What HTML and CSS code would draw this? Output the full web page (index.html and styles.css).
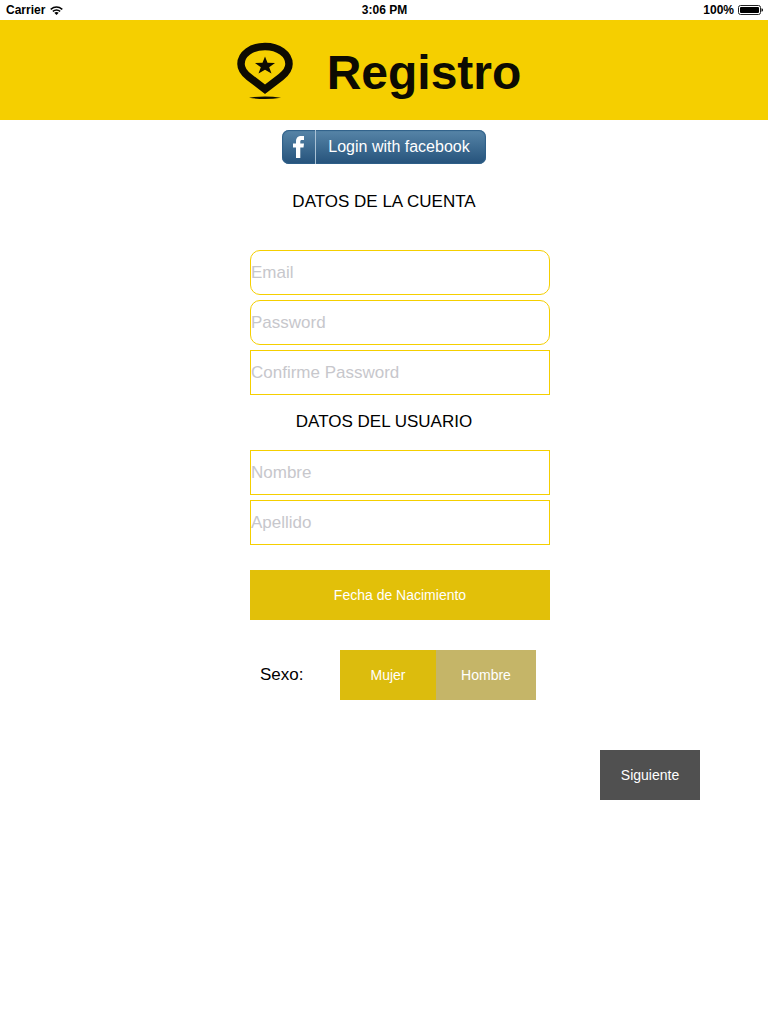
FILE: index.html
```html
<!DOCTYPE html>
<html lang="es">
<head>
<meta charset="utf-8">
<meta name="viewport" content="width=device-width, initial-scale=1">
<title>Registro</title>
<link rel="stylesheet" href="styles.css">
</head>
<body>
<div class="status">
  <div class="status-left">
    <span>Carrier</span>
    <svg class="wifi" viewBox="0 0 13 9" aria-hidden="true">
      <path d="M.7 3.3Q6.500-1.300 12.300 3.300M2.800 5.400Q6.500 2.500 10.200 5.400" fill="none" stroke="#000" stroke-width="1.500"/>
      <path d="M4.300 6.700Q6.500 5.100 8.700 6.700L6.500 9Z"/>
    </svg>
  </div>
  <span>3:06 PM</span>
  <div class="status-right">
    <span>100%</span>
    <svg class="battery" viewBox="0 0 25 10" aria-hidden="true">
      <rect x=".5" y=".5" width="22" height="9" rx="2" fill="#fff" stroke="#222"/>
      <rect x="2" y="2" width="19" height="6" rx="1"/>
      <path d="M23.500 3.200Q25 3.500 25 5T23.500 6.800Z"/>
    </svg>
  </div>
</div>
<header class="header">
  <svg class="pin" viewBox="0 0 56 58" aria-hidden="true">
    <path d="M28 4.500C14.500 4.500 4 12 4 22C4 28 7.500 31.500 12 35L28 47.300L44 35C48.500 31.500 52 28 52 22C52 12 41.500 4.500 28 4.500Z" fill="none" stroke="#0d0b02" stroke-width="7.500"/>
    <path d="M28 14.500L30.500 20.800L38 21L32.200 25.200L34.500 31.500L28 27.800L21.500 31.500L23.800 25.200L18 21L25.500 20.800Z" fill="#0d0b02"/>
    <path d="M12 55.800Q28 53 44 55.800Q28 58.200 12 55.800Z" fill="#0d0b02"/>
  </svg>
  <h1 class="title">Registro</h1>
</header>
<main class="page">
  <button class="facebook" type="button">
    <span class="facebook-mark"><svg class="facebook-icon" viewBox="0 0 12 22" aria-hidden="true"><path d="M3 22V11.500H0V7.500H3V5.500C3 1.800 5 0 8.200 0H11V4H9C7.600 4 7.300 4.600 7.300 5.700V7.500H11L10.500 11.500H7.300V22Z" fill="#fff"/></svg></span>
    <span class="facebook-label">Login with facebook</span>
  </button>
  <form class="form">
    <h2 class="heading heading-account">DATOS DE LA CUENTA</h2>
    <div class="fields">
      <input class="field field-round" type="email" placeholder="Email" aria-label="Email">
      <input class="field field-round" type="password" placeholder="Password" aria-label="Password">
      <input class="field" type="password" placeholder="Confirme Password" aria-label="Confirme Password">
    </div>
    <h2 class="heading heading-user">DATOS DEL USUARIO</h2>
    <div class="fields">
      <input class="field" type="text" placeholder="Nombre" aria-label="Nombre">
      <input class="field" type="text" placeholder="Apellido" aria-label="Apellido">
      <button class="button birth" type="button">Fecha de Nacimiento</button>
      <div class="gender" role="group" aria-labelledby="gender-label">
        <span class="gender-label" id="gender-label">Sexo:</span>
        <button class="button female" type="button">Mujer</button>
        <button class="button male" type="button">Hombre</button>
      </div>
    </div>
    <button class="button next" type="button">Siguiente</button>
  </form>
</main>
</body>
</html>
```
FILE: styles.css
```css
* {
  box-sizing: border-box;
}

body {
  margin: 0;
  background: #fff;
  color: #000;
  font-family: "Liberation Sans", Arial, sans-serif;
}

button,
input {
  font-family: inherit;
}

.status {
  display: grid;
  grid-template-columns: 1fr auto 1fr;
  align-items: center;
  height: 20px;
  padding: 0 5px 0 6px;
  font-size: 12px;
  font-weight: 700;
  line-height: 20px;
}

.status-left,
.status-right {
  display: flex;
  align-items: center;
}

.status-left {
  gap: 5px;
}

.status-right {
  justify-content: flex-end;
  gap: 4px;
}

.wifi {
  width: 13px;
  height: 9px;
}

.battery {
  width: 25px;
  height: 10px;
}

.header {
  display: flex;
  justify-content: center;
  align-items: center;
  gap: 34px;
  height: 100px;
  padding: 2px 10px 0 0;
  background: #f5cf00;
}

.pin {
  width: 56px;
  height: 58px;
}

.title {
  margin: 0;
  padding-top: 4px;
  color: #0d0b02;
  font-size: 48px;
  font-weight: 700;
  line-height: 56px;
}

.page {
  display: flex;
  flex-direction: column;
  padding-top: 10px;
}

.facebook {
  display: flex;
  align-self: center;
  width: 204px;
  height: 34px;
  padding: 0;
  overflow: hidden;
  border: 0;
  border-radius: 7px;
  background: linear-gradient(#5785a8, #25527b);
  box-shadow: inset 0 0 1px 1px #2f6089;
  color: #fff;
}

.facebook-mark {
  display: flex;
  justify-content: center;
  align-items: center;
  width: 34px;
  height: 34px;
  border-right: 1px solid #a9c2d5;
}

.facebook-icon {
  width: 12px;
  height: 22px;
}

.facebook-label {
  flex: 1;
  padding-right: 4px;
  font-size: 16px;
  line-height: 34px;
  text-align: center;
}

.form {
  display: flex;
  flex-direction: column;
}

.heading {
  margin: 0;
  font-size: 17px;
  font-weight: 400;
  line-height: 20px;
  text-align: center;
}

.heading-account {
  padding: 28px 0 38px;
}

.heading-user {
  padding: 17px 0 18px;
}

.fields {
  display: flex;
  flex-direction: column;
  align-self: center;
  gap: 5px;
  width: 300px;
  margin-left: 32px;
}

.field {
  width: 100%;
  height: 45px;
  padding: 0;
  border: 1px solid #f5cf00;
  border-radius: 0;
  background: #fff;
  color: #000;
  font-size: 17px;
}

.field-round {
  border-radius: 10px;
}

.field::placeholder {
  color: #c7c7cc;
  opacity: 1;
}

.button {
  height: 50px;
  padding: 0;
  border: 0;
  color: #fff;
  font-size: 14px;
}

.birth {
  margin-top: 20px;
  background: #e2c009;
}

.gender {
  display: flex;
  margin-top: 25px;
}

.gender-label {
  width: 90px;
  padding-left: 10px;
  font-size: 17px;
  line-height: 50px;
}

.female {
  width: 96px;
  background: #dcbc0d;
}

.male {
  width: 100px;
  background: #c5b568;
}

.next {
  align-self: flex-end;
  width: 100px;
  margin: 50px 68px 0 0;
  background: #505050;
}
```
